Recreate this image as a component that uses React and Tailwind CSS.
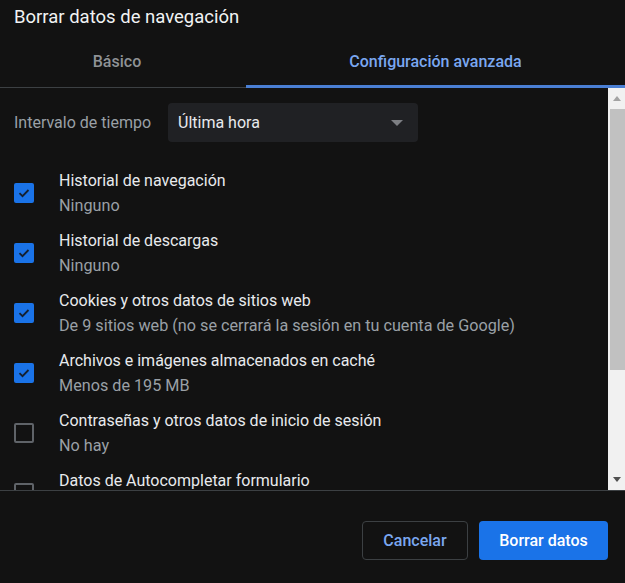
import React from 'react';

const items = [
  { title: 'Historial de navegación', sub: 'Ninguno', checked: true },
  { title: 'Historial de descargas', sub: 'Ninguno', checked: true },
  { title: 'Cookies y otros datos de sitios web', sub: 'De 9 sitios web (no se cerrará la sesión en tu cuenta de Google)', checked: true },
  { title: 'Archivos e imágenes almacenados en caché', sub: 'Menos de 195 MB', checked: true },
  { title: 'Contraseñas y otros datos de inicio de sesión', sub: 'No hay', checked: false },
  { title: 'Datos de Autocompletar formulario', sub: '', checked: false },
];

// Checkbox
const Checkbox = ({ checked }) => (
  checked ? (
    <div className="w-[20px] h-[20px] rounded-[2px] bg-[#1a73e8] flex items-center justify-center shrink-0">
      <svg width="14" height="14" viewBox="0 0 14 14" fill="none">
        <path d="M2.5 7.2l3 3 6-6.2" stroke="#15202e" strokeWidth="1.8" />
      </svg>
    </div>
  ) : (
    <div className="w-[20px] h-[20px] rounded-[2px] border-2 border-[#5f6368] shrink-0" />
  )
);

const Row = ({ title, sub, checked }) => (
  <div className="flex items-center h-[60px] shrink-0">
    <div className="ml-[14px]">
      <Checkbox checked={checked} />
    </div>
    <div className="ml-[25px] flex flex-col">
      <div className="text-[16px] h-[25px] leading-[25px] text-[#e8eaed] whitespace-nowrap">{title}</div>
      <div className="text-[16.2px] h-[25px] leading-[25px] text-[#9aa0a6] whitespace-nowrap">{sub}</div>
    </div>
  </div>
);

export default function App() {
  return (
    <div
      className="w-[625px] h-[583px] bg-[#121212] flex flex-col overflow-hidden"
      style={{ fontFamily: 'Roboto, "Noto Sans", sans-serif' }}
    >
      <div className="h-[36px] px-[14px] flex items-center text-[18.5px] text-[#f1f3f4]">
        Borrar datos de navegación
      </div>

      {/* Tabs */}
      <div className="h-[52px] flex border-b border-[#3c4043]">
        <div className="w-[234px] flex items-center justify-center text-[16px] font-medium text-[#8f9296]">
          Básico
        </div>
        <div className="w-[12px]" />
        <div className="flex-1 flex items-center justify-center text-[16px] font-medium text-[#7aa7f0] border-b-[3px] border-[#4a7fd4] mb-[-1px] pt-[3px]">
          Configuración avanzada
        </div>
      </div>

      {/* Content */}
      <div className="h-[403px] flex border-b border-[#3c4043]">
        <div className="flex-1 overflow-hidden flex flex-col">
          <div className="flex items-center pt-[15px] shrink-0">
            <span className="ml-[14px] w-[154px] text-[16px] text-[#9aa0a6] whitespace-nowrap">Intervalo de tiempo</span>
            <div className="w-[250px] h-[39px] rounded-[4px] bg-[#202124] flex items-center justify-between px-[10px]">
              <span className="text-[16px] text-[#e8eaed]">Última hora</span>
              <svg width="12" height="6" viewBox="0 0 12 6" className="mr-[5px]">
                <path d="M0 0h12L6 6z" fill="#7d7f83" />
              </svg>
            </div>
          </div>
          <div className="h-[21px] shrink-0" />
          {items.map((it) => (
            <Row key={it.title} {...it} />
          ))}
        </div>

        {/* Scrollbar */}
        <div className="w-[17px] bg-[#f1f1f1] flex flex-col">
          <div className="h-[21px] flex items-center justify-center">
            <svg width="8" height="5" viewBox="0 0 8 5">
              <path d="M0 5h8L4 0z" fill="#a3a3a3" />
            </svg>
          </div>
          <div className="h-[261px] ml-[2px] bg-[#c1c1c1]" />
          <div className="flex-1" />
          <div className="h-[21px] flex items-center justify-center">
            <svg width="8" height="5" viewBox="0 0 8 5">
              <path d="M0 0h8L4 5z" fill="#505050" />
            </svg>
          </div>
        </div>
      </div>

      {/* Footer */}
      <div className="flex-1 flex justify-end items-start pt-[30px] pr-[17px] gap-[11px]">
        <button className="w-[106px] h-[39px] rounded-[4px] border border-[#3c4043] text-[16px] font-medium text-[#7aa7f0]">
          Cancelar
        </button>
        <button className="w-[129px] h-[39px] rounded-[4px] bg-[#1a73e8] text-[16px] font-medium text-white">
          Borrar datos
        </button>
      </div>
    </div>
  );
}
